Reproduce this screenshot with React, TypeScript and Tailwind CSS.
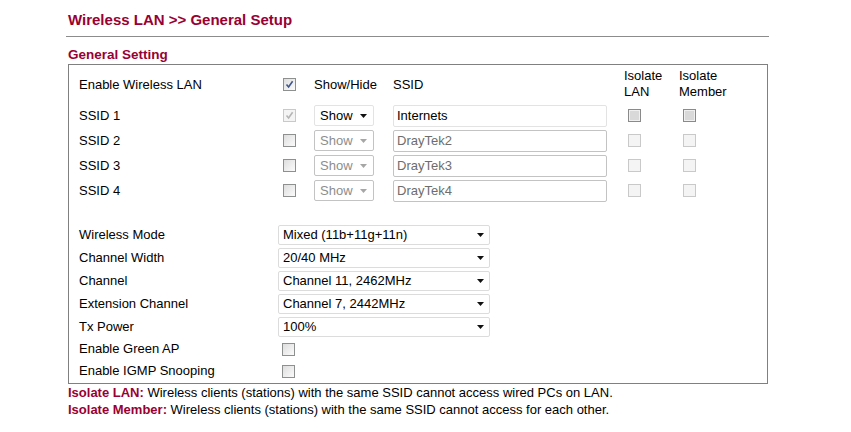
import React from "react";

type BoxKind = "on" | "off" | "dim" | "dimOn" | "grey";

function CheckBox({ kind }: { kind: BoxKind }) {
  const outer =
    kind === "dim" || kind === "dimOn"
      ? "border-[#c9c9c9] bg-[#f4f4f4]"
      : kind === "grey"
        ? "border-[#8a8a8a] bg-[#d9d9d9]"
        : "border-[#8e8f8f] bg-gradient-to-br from-[#dedede] to-[#fbfbfb]";
  return (
    <span className={`relative inline-flex w-[13px] h-[13px] border ${outer}`}>
      {kind === "grey" && <span className="absolute inset-0 border border-[#f0f0f0]" />}
      {(kind === "on" || kind === "dimOn") && (
        <svg viewBox="0 0 11 11" className="absolute inset-0 w-[11px] h-[11px]">
          <path
            d="M2.5 5.5 L4.6 8 L8.6 2.2"
            fill="none"
            stroke={kind === "on" ? "#3f558f" : "#b4b4b4"}
            strokeWidth="1.6"
          />
        </svg>
      )}
    </span>
  );
}

function Arrow({ dim }: { dim?: boolean }) {
  return (
    <svg viewBox="0 0 7 4" className="w-[7px] h-[4px]">
      <path d="M0 0 H7 L3.5 4 Z" fill={dim ? "#a6a6a6" : "#111"} />
    </svg>
  );
}

function ShowSelect({ dim }: { dim?: boolean }) {
  return (
    <div
      className={`w-[60px] h-[21px] flex items-center justify-between pl-[5px] pr-[6px] bg-white rounded-[2px] border ${
        dim ? "border-[#c3c3c3] text-[#8d8d8d]" : "border-[#e3e3e3] text-black"
      }`}
    >
      <span>Show</span>
      <Arrow dim={dim} />
    </div>
  );
}

function SsidInput({ value, dim }: { value: string; dim?: boolean }) {
  return (
    <div
      className={`w-[214px] h-[22px] flex items-center px-[3px] bg-white rounded-[2px] border ${
        dim ? "border-[#c3c3c3] text-[#6d6d6d]" : "border-[#e3e3e3] text-black"
      }`}
    >
      {value}
    </div>
  );
}

function WideSelect({ value }: { value: string }) {
  return (
    <div className="w-[212px] h-[20px] flex items-center justify-between pl-[4px] pr-[5px] bg-white rounded-[2px] border border-[#dcdcdc]">
      <span>{value}</span>
      <Arrow />
    </div>
  );
}

const ssids = [
  { name: "SSID 1", value: "Internets", on: true },
  { name: "SSID 2", value: "DrayTek2", on: false },
  { name: "SSID 3", value: "DrayTek3", on: false },
  { name: "SSID 4", value: "DrayTek4", on: false },
];

const radio = [
  { label: "Wireless Mode", value: "Mixed (11b+11g+11n)" },
  { label: "Channel Width", value: "20/40 MHz" },
  { label: "Channel", value: "Channel 11, 2462MHz" },
  { label: "Extension Channel", value: "Channel 7, 2442MHz" },
  { label: "Tx Power", value: "100%" },
];

export default function App() {
  return (
    <div className="w-[851px] h-[432px] bg-white text-black text-[13px] font-['Liberation_Sans',Arial,sans-serif] overflow-hidden">
      <div className="pl-[66px] pt-[10px] w-[769px]">
        <h1 className="pl-[2px] text-[15px] leading-[20px] font-bold text-[#990033]">
          Wireless LAN &gt;&gt; General Setup
        </h1>
        <div className="mt-[6px] h-px bg-[#8c8c8c]" />
        <h2 className="pl-[2px] mt-[9px] text-[13.5px] leading-[18px] font-bold text-[#990033]">
          General Setting
        </h2>

        {/* settings box */}
        <div className="ml-[2px] w-[700px] border border-[#808080] pl-[10px] pt-[1px] pb-[1px]">
          <div className="flex items-center h-[37px]">
            <div className="w-[204px]">Enable Wireless LAN</div>
            <div className="w-[31px] flex">
              <CheckBox kind="on" />
            </div>
            <div className="w-[79px]">Show/Hide</div>
            <div className="w-[231px]">SSID</div>
            <div className="w-[55px] leading-[16px] self-start pt-[2px]">
              Isolate
              <br />
              LAN
            </div>
            <div className="leading-[16px] self-start pt-[2px]">
              Isolate
              <br />
              Member
            </div>
          </div>

          {ssids.map((s) => (
            <div key={s.name} className="flex items-center h-[25px]">
              <div className="w-[204px]">{s.name}</div>
              <div className="w-[31px] flex">
                <CheckBox kind={s.on ? "dimOn" : "off"} />
              </div>
              <div className="w-[79px]">
                <ShowSelect dim={!s.on} />
              </div>
              <div className="w-[231px]">
                <SsidInput value={s.value} dim={!s.on} />
              </div>
              <div className="w-[55px] flex pl-[4px]">
                <CheckBox kind={s.on ? "grey" : "dim"} />
              </div>
              <div className="flex pl-[4px]">
                <CheckBox kind={s.on ? "grey" : "dim"} />
              </div>
            </div>
          ))}

          <div className="h-[20px]" />

          {radio.map((r) => (
            <div key={r.label} className="flex items-center h-[23px]">
              <div className="w-[199px]">{r.label}</div>
              <WideSelect value={r.value} />
            </div>
          ))}

          {["Enable Green AP", "Enable IGMP Snooping"].map((l) => (
            <div key={l} className="flex items-center h-[22px]">
              <div className="w-[199px]">{l}</div>
              <div className="flex pl-[4px]">
                <CheckBox kind="off" />
              </div>
            </div>
          ))}
        </div>

        <div className="pl-[2px] leading-[17px]">
          <p>
            <span className="font-bold text-[#990033]">Isolate LAN:</span> Wireless clients (stations) with the same SSID
            cannot access wired PCs on LAN.
          </p>
          <p>
            <span className="font-bold text-[#990033]">Isolate Member:</span> Wireless clients (stations) with the same
            SSID cannot access for each other.
          </p>
        </div>
      </div>
    </div>
  );
}
